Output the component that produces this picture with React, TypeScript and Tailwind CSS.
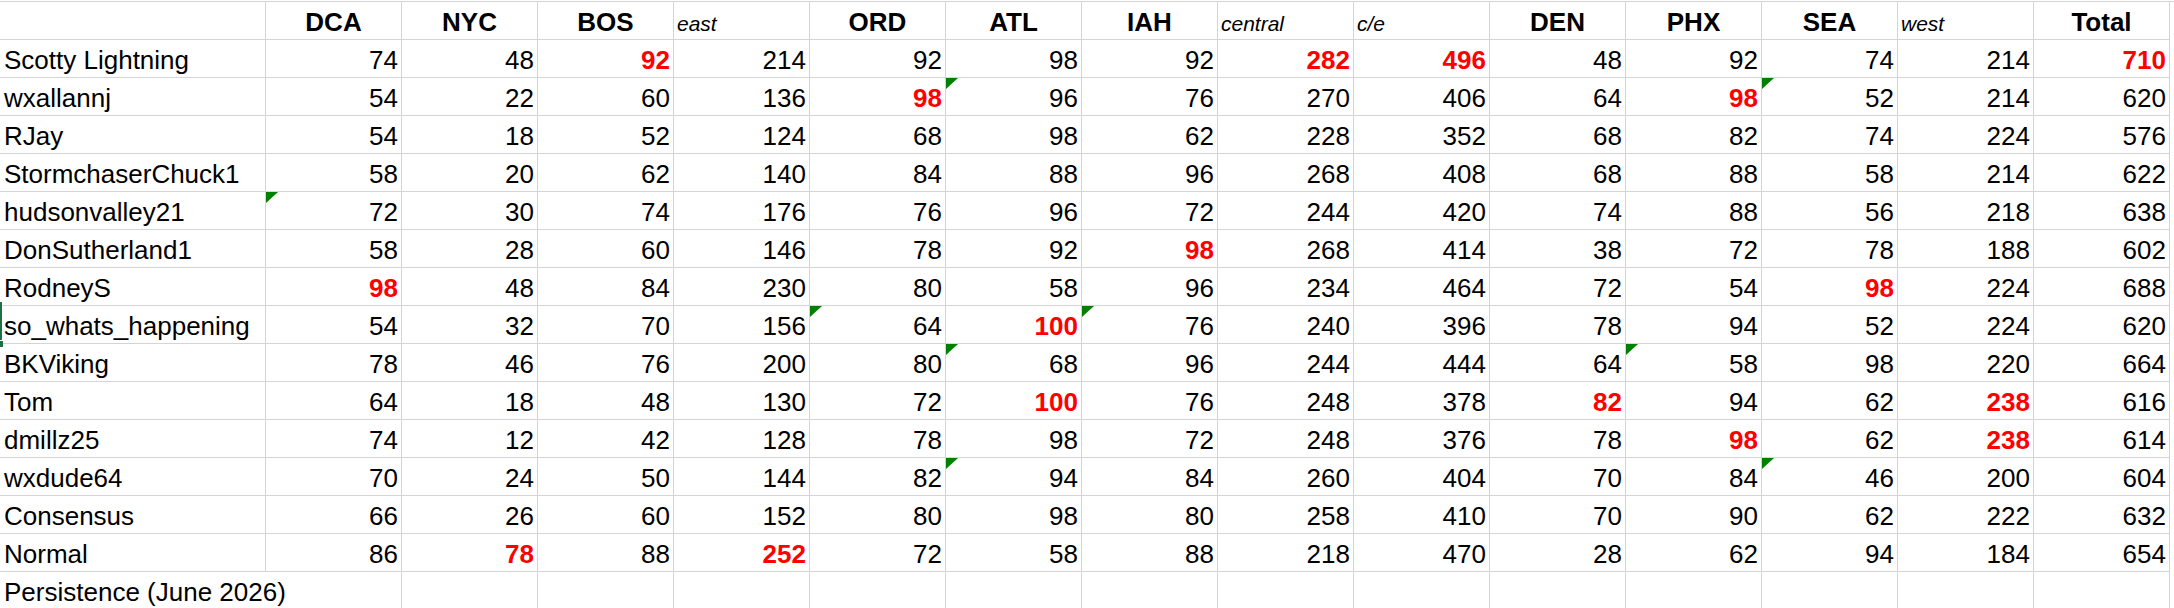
type Row = { name: string; values: number[]; red?: number[]; flags?: number[] }

const headers: { label: string; italic?: boolean }[] = [
  { label: 'DCA' },
  { label: 'NYC' },
  { label: 'BOS' },
  { label: 'east', italic: true },
  { label: 'ORD' },
  { label: 'ATL' },
  { label: 'IAH' },
  { label: 'central', italic: true },
  { label: 'c/e', italic: true },
  { label: 'DEN' },
  { label: 'PHX' },
  { label: 'SEA' },
  { label: 'west', italic: true },
  { label: 'Total' },
]

const rows: Row[] = [
  { name: 'Scotty Lightning', values: [74, 48, 92, 214, 92, 98, 92, 282, 496, 48, 92, 74, 214, 710], red: [2, 7, 8, 13] },
  { name: 'wxallannj', values: [54, 22, 60, 136, 98, 96, 76, 270, 406, 64, 98, 52, 214, 620], red: [4, 10], flags: [5, 11] },
  { name: 'RJay', values: [54, 18, 52, 124, 68, 98, 62, 228, 352, 68, 82, 74, 224, 576] },
  { name: 'StormchaserChuck1', values: [58, 20, 62, 140, 84, 88, 96, 268, 408, 68, 88, 58, 214, 622] },
  { name: 'hudsonvalley21', values: [72, 30, 74, 176, 76, 96, 72, 244, 420, 74, 88, 56, 218, 638], flags: [0] },
  { name: 'DonSutherland1', values: [58, 28, 60, 146, 78, 92, 98, 268, 414, 38, 72, 78, 188, 602], red: [6] },
  { name: 'RodneyS', values: [98, 48, 84, 230, 80, 58, 96, 234, 464, 72, 54, 98, 224, 688], red: [0, 11] },
  { name: 'so_whats_happening', values: [54, 32, 70, 156, 64, 100, 76, 240, 396, 78, 94, 52, 224, 620], red: [5], flags: [4, 6] },
  { name: 'BKViking', values: [78, 46, 76, 200, 80, 68, 96, 244, 444, 64, 58, 98, 220, 664], flags: [5, 10] },
  { name: 'Tom', values: [64, 18, 48, 130, 72, 100, 76, 248, 378, 82, 94, 62, 238, 616], red: [5, 9, 12] },
  { name: 'dmillz25', values: [74, 12, 42, 128, 78, 98, 72, 248, 376, 78, 98, 62, 238, 614], red: [10, 12] },
  { name: 'wxdude64', values: [70, 24, 50, 144, 82, 94, 84, 260, 404, 70, 84, 46, 200, 604], flags: [5, 11] },
  { name: 'Consensus', values: [66, 26, 60, 152, 80, 98, 80, 258, 410, 70, 90, 62, 222, 632] },
  { name: 'Normal', values: [86, 78, 88, 252, 72, 58, 88, 218, 470, 28, 62, 94, 184, 654], red: [1, 3] },
]

const cell = 'relative h-[38px] border-r border-b border-[#d4d4d4] overflow-visible whitespace-nowrap'

function Flag() {
  return (
    <span className="absolute left-0 top-0 h-0 w-0 border-t-[11px] border-r-[12px] border-t-[#008000] border-r-transparent" />
  )
}

export default function App() {
  return (
    <div className="relative h-[608px] w-full overflow-hidden bg-white pt-px font-['Liberation_Sans',Arial,sans-serif] text-[26px] text-black">
      <div className="grid grid-cols-[266px_repeat(14,136px)] border-t border-[#d4d4d4]">
        <div className={cell} />
        {headers.map((h) =>
          h.italic ? (
            <div key={h.label} className={`${cell} pl-[3px] pt-[6px] text-[21px] italic leading-[31px]`}>
              {h.label}
            </div>
          ) : (
            <div key={h.label} className={`${cell} pt-[3px] text-center font-bold leading-[34px]`}>
              {h.label}
            </div>
          ),
        )}

        {rows.map((r) => (
          <div key={r.name} className="contents">
            <div className={`${cell} pl-[4px] pt-[3px] leading-[34px]`}>{r.name}</div>
            {r.values.map((v, i) => (
              <div
                key={i}
                className={`${cell} pr-[3px] pt-[3px] text-right leading-[34px] ${
                  r.red?.includes(i) ? 'font-bold text-[#ff0000]' : ''
                }`}
              >
                {r.flags?.includes(i) && <Flag />}
                {v}
              </div>
            ))}
          </div>
        ))}

        <div className="relative h-[38px] whitespace-nowrap border-b border-[#d4d4d4] pl-[4px] pt-[3px] leading-[34px]">
          Persistence (June 2026)
        </div>
        {headers.map((h) => (
          <div key={h.label} className={cell} />
        ))}
      </div>

      {/* selection edge from the column off to the left */}
      <div className="absolute left-0 top-[302px] h-[38px] w-[2px] bg-[#1e7145]" />
      <div className="absolute left-0 top-[341px] h-[6px] w-[3px] bg-[#1e7145]" />
    </div>
  )
}
